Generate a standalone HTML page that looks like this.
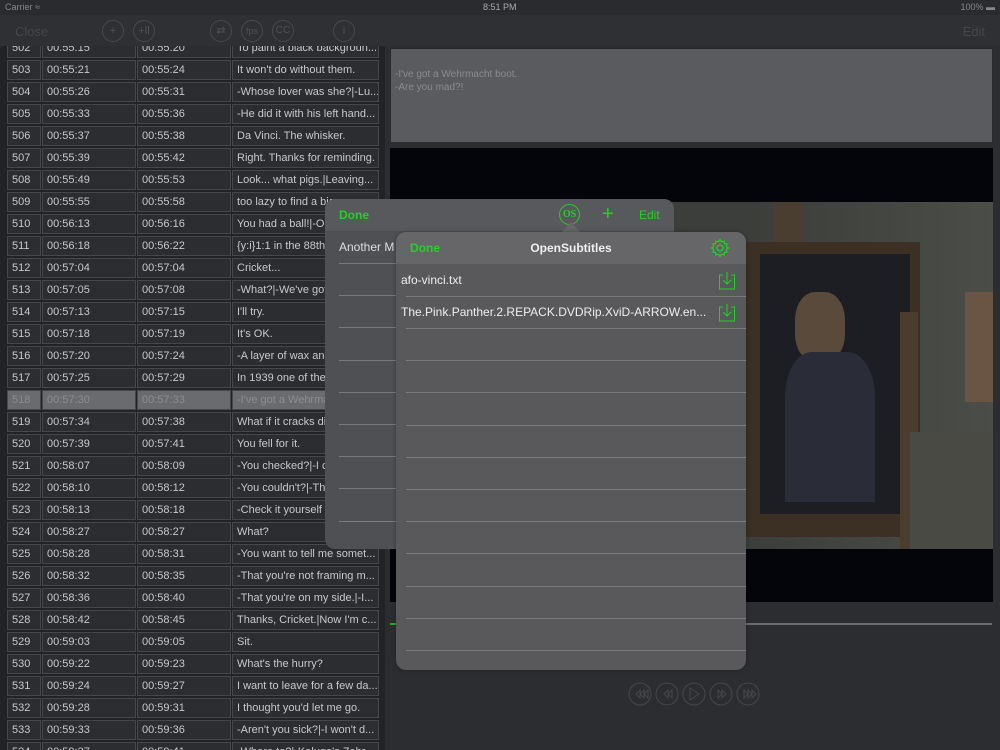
<!DOCTYPE html>
<html><head><meta charset="utf-8"><style>
*{margin:0;padding:0;box-sizing:border-box}
body{width:1000px;height:750px;overflow:hidden;background:#2c2d31;font-family:"Liberation Sans",sans-serif;position:relative;color:#c8c8cc}
.abs{position:absolute}
#status{left:0;top:0;width:1000px;height:15px;background:#2a2b2f;font-size:9px;color:#888}
#tb{left:0;top:15px;width:1000px;height:31px;background:#2f3034;z-index:5;opacity:1}
.tbi{position:absolute;top:5px;width:22px;height:22px;border:1px solid #48494d;border-radius:50%;color:#505155;font-size:11px;text-align:center;line-height:20px}
#rows{left:0;top:37px;width:385px;height:713px;overflow:hidden;background:#222327}
.r{position:absolute;left:7px;height:22px;width:372px}
.c{position:absolute;top:1px;height:20px;background:#2c2d31;border:1px solid #46474b;font-size:11px;color:#c8c8cc;line-height:18px;padding-left:4px;white-space:nowrap;overflow:hidden}
.c1{left:0;width:34px}.c2{left:35px;width:94px}.c3{left:130px;width:94px}.c4{left:225px;width:147px}
.hl .c{background:#6a6b6f;color:#8c8d91}
#txt{left:390px;top:48px;width:603px;height:95px;background:#5a5b5f;border:1px solid #2a2a2e;font-size:10px;color:#8a8b8f;padding:19px 0 0 4px;line-height:13px}
#vid{left:390px;top:148px;width:603px;height:454px;background:#03050a}
#img{left:390px;top:202px;width:603px;height:347px;background:linear-gradient(90deg,#3a3c3c 0%,#3b3e3a 60%,#4a4d48 100%)}
.sep{position:absolute;height:1px;background:#7a7a7c}
#back{left:325px;top:199px;width:349px;height:350px;background:#4f5054;border-radius:10px;overflow:hidden}
#front{left:396px;top:232px;width:350px;height:438px;background:#59595b;border-radius:10px;overflow:hidden;box-shadow:0 0 4px rgba(0,0,0,.3)}
.g{color:#1fd41f}
</style></head><body>
<div id="status" class="abs"><span style="position:absolute;left:5px;top:2px">Carrier ≈</span><span style="position:absolute;left:483px;top:2px;color:#aaa">8:51 PM</span><span style="position:absolute;right:5px;top:2px">100% ▬</span></div>
<div id="tb" class="abs">
<span style="position:absolute;left:15px;top:9px;font-size:13px;color:#45464a">Close</span>
<div class="tbi" style="left:102px">+</div><div class="tbi" style="left:133px">+ll</div>
<div class="tbi" style="left:210px">⇄</div><div class="tbi" style="left:241px;font-size:9px">fps</div><div class="tbi" style="left:272px;font-size:10px">CC</div>
<div class="tbi" style="left:333px">i</div>
<span style="position:absolute;right:15px;top:9px;font-size:13px;color:#45464a">Edit</span>
</div>
<div id="rows" class="abs">
<div class="r" style="top:0"><div class="c c1">502</div><div class="c c2">00:55:15</div><div class="c c3">00:55:20</div><div class="c c4">To paint a black backgroun...</div></div>
<div class="r" style="top:22px"><div class="c c1">503</div><div class="c c2">00:55:21</div><div class="c c3">00:55:24</div><div class="c c4">It won't do without them.</div></div>
<div class="r" style="top:44px"><div class="c c1">504</div><div class="c c2">00:55:26</div><div class="c c3">00:55:31</div><div class="c c4">-Whose lover was she?|-Lu...</div></div>
<div class="r" style="top:66px"><div class="c c1">505</div><div class="c c2">00:55:33</div><div class="c c3">00:55:36</div><div class="c c4">-He did it with his left hand...</div></div>
<div class="r" style="top:88px"><div class="c c1">506</div><div class="c c2">00:55:37</div><div class="c c3">00:55:38</div><div class="c c4">Da Vinci. The whisker.</div></div>
<div class="r" style="top:110px"><div class="c c1">507</div><div class="c c2">00:55:39</div><div class="c c3">00:55:42</div><div class="c c4">Right. Thanks for reminding.</div></div>
<div class="r" style="top:132px"><div class="c c1">508</div><div class="c c2">00:55:49</div><div class="c c3">00:55:53</div><div class="c c4">Look... what pigs.|Leaving...</div></div>
<div class="r" style="top:154px"><div class="c c1">509</div><div class="c c2">00:55:55</div><div class="c c3">00:55:58</div><div class="c c4">too lazy to find a big one</div></div>
<div class="r" style="top:176px"><div class="c c1">510</div><div class="c c2">00:56:13</div><div class="c c3">00:56:16</div><div class="c c4">You had a ball!|-Oh</div></div>
<div class="r" style="top:198px"><div class="c c1">511</div><div class="c c2">00:56:18</div><div class="c c3">00:56:22</div><div class="c c4">{y:i}1:1 in the 88th</div></div>
<div class="r" style="top:220px"><div class="c c1">512</div><div class="c c2">00:57:04</div><div class="c c3">00:57:04</div><div class="c c4">Cricket...</div></div>
<div class="r" style="top:242px"><div class="c c1">513</div><div class="c c2">00:57:05</div><div class="c c3">00:57:08</div><div class="c c4">-What?|-We've got</div></div>
<div class="r" style="top:264px"><div class="c c1">514</div><div class="c c2">00:57:13</div><div class="c c3">00:57:15</div><div class="c c4">I'll try.</div></div>
<div class="r" style="top:286px"><div class="c c1">515</div><div class="c c2">00:57:18</div><div class="c c3">00:57:19</div><div class="c c4">It's OK.</div></div>
<div class="r" style="top:308px"><div class="c c1">516</div><div class="c c2">00:57:20</div><div class="c c3">00:57:24</div><div class="c c4">-A layer of wax and</div></div>
<div class="r" style="top:330px"><div class="c c1">517</div><div class="c c2">00:57:25</div><div class="c c3">00:57:29</div><div class="c c4">In 1939 one of the</div></div>
<div class="r hl" style="top:352px"><div class="c c1">518</div><div class="c c2">00:57:30</div><div class="c c3">00:57:33</div><div class="c c4">-I've got a Wehrmacht</div></div>
<div class="r" style="top:374px"><div class="c c1">519</div><div class="c c2">00:57:34</div><div class="c c3">00:57:38</div><div class="c c4">What if it cracks di</div></div>
<div class="r" style="top:396px"><div class="c c1">520</div><div class="c c2">00:57:39</div><div class="c c3">00:57:41</div><div class="c c4">You fell for it.</div></div>
<div class="r" style="top:418px"><div class="c c1">521</div><div class="c c2">00:58:07</div><div class="c c3">00:58:09</div><div class="c c4">-You checked?|-I c</div></div>
<div class="r" style="top:440px"><div class="c c1">522</div><div class="c c2">00:58:10</div><div class="c c3">00:58:12</div><div class="c c4">-You couldn't?|-The</div></div>
<div class="r" style="top:462px"><div class="c c1">523</div><div class="c c2">00:58:13</div><div class="c c3">00:58:18</div><div class="c c4">-Check it yourself</div></div>
<div class="r" style="top:484px"><div class="c c1">524</div><div class="c c2">00:58:27</div><div class="c c3">00:58:27</div><div class="c c4">What?</div></div>
<div class="r" style="top:506px"><div class="c c1">525</div><div class="c c2">00:58:28</div><div class="c c3">00:58:31</div><div class="c c4">-You want to tell me somet...</div></div>
<div class="r" style="top:528px"><div class="c c1">526</div><div class="c c2">00:58:32</div><div class="c c3">00:58:35</div><div class="c c4">-That you're not framing m...</div></div>
<div class="r" style="top:550px"><div class="c c1">527</div><div class="c c2">00:58:36</div><div class="c c3">00:58:40</div><div class="c c4">-That you're on my side.|-I...</div></div>
<div class="r" style="top:572px"><div class="c c1">528</div><div class="c c2">00:58:42</div><div class="c c3">00:58:45</div><div class="c c4">Thanks, Cricket.|Now I'm c...</div></div>
<div class="r" style="top:594px"><div class="c c1">529</div><div class="c c2">00:59:03</div><div class="c c3">00:59:05</div><div class="c c4">Sit.</div></div>
<div class="r" style="top:616px"><div class="c c1">530</div><div class="c c2">00:59:22</div><div class="c c3">00:59:23</div><div class="c c4">What's the hurry?</div></div>
<div class="r" style="top:638px"><div class="c c1">531</div><div class="c c2">00:59:24</div><div class="c c3">00:59:27</div><div class="c c4">I want to leave for a few da...</div></div>
<div class="r" style="top:660px"><div class="c c1">532</div><div class="c c2">00:59:28</div><div class="c c3">00:59:31</div><div class="c c4">I thought you'd let me go.</div></div>
<div class="r" style="top:682px"><div class="c c1">533</div><div class="c c2">00:59:33</div><div class="c c3">00:59:36</div><div class="c c4">-Aren't you sick?|-I won't d...</div></div>
<div class="r" style="top:704px"><div class="c c1">534</div><div class="c c2">00:59:37</div><div class="c c3">00:59:41</div><div class="c c4">-Where to?|-Kaluga's Zebr...</div></div>
</div>
<div id="txt" class="abs">-I've got a Wehrmacht boot.<br>-Are you mad?!</div>
<div id="vid" class="abs"></div>
<div id="img" class="abs">
<div class="abs" style="left:383px;top:0;width:30px;height:40px;background:#4a3e30"></div>
<div class="abs" style="left:355px;top:40px;width:175px;height:295px;background:#3b3023"></div>
<div class="abs" style="left:370px;top:52px;width:150px;height:260px;background:#1c1e24"></div>
<div class="abs" style="left:405px;top:90px;width:50px;height:70px;background:#5a4a3c;border-radius:40%"></div>
<div class="abs" style="left:395px;top:150px;width:90px;height:150px;background:#2a2c38;border-radius:30% 30% 0 0"></div>
<div class="abs" style="left:510px;top:110px;width:18px;height:237px;background:#4a3d2e"></div>
<div class="abs" style="left:575px;top:90px;width:28px;height:110px;background:#6a5545"></div>
<div class="abs" style="left:520px;top:230px;width:83px;height:117px;background:#4a4a44"></div>
</div>
<div class="abs" style="left:390px;top:623px;width:602px;height:2px;background:#6a6b6e"></div>
<div class="abs" style="left:390px;top:623px;width:5px;height:2px;background:#1fb01f"></div>
<svg class="abs" style="left:620px;top:680px" width="150" height="28" fill="none" stroke="#46474b" stroke-width="1">
<circle cx="20" cy="14" r="11"/><circle cx="47" cy="14" r="11"/><circle cx="74" cy="14" r="11"/><circle cx="101" cy="14" r="11"/><circle cx="128" cy="14" r="11"/>
<path d="M16 14l4-4v8zM20 14l4-4v8zM24 14l4-4v8zM44 14l4-4v8zM48 14l4-4v8zM70 8l9 6-9 6zM98 10l4 4-4 4zM102 10l4 4-4 4zM124 10l4 4-4 4zM128 10l4 4-4 4zM132 10l4 4-4 4z"/>
</svg>
<div id="back" class="abs">
<div class="abs" style="left:0;top:0;width:349px;height:32px;background:#58595d"></div>
<span class="abs g" style="left:14px;top:9px;font-size:12px;font-weight:bold">Done</span>
<div class="abs g" style="left:234px;top:5px;width:21px;height:21px;border:1px solid #1fd41f;border-radius:50%;font-size:10px;font-weight:bold;text-align:center;line-height:19px;font-family:'Liberation Serif',serif">OS</div>
<span class="abs g" style="left:277px;top:5px;font-size:20px;line-height:20px">+</span>
<span class="abs g" style="left:314px;top:9px;font-size:12px">Edit</span>
<span class="abs" style="left:14px;top:41px;font-size:12px;color:#ddd">Another M</span>
<div class="sep" style="left:14px;top:64px;width:420px"></div><div class="sep" style="left:14px;top:96px;width:420px"></div><div class="sep" style="left:14px;top:128px;width:420px"></div><div class="sep" style="left:14px;top:161px;width:420px"></div><div class="sep" style="left:14px;top:193px;width:420px"></div><div class="sep" style="left:14px;top:225px;width:420px"></div><div class="sep" style="left:14px;top:257px;width:420px"></div><div class="sep" style="left:14px;top:289px;width:420px"></div><div class="sep" style="left:14px;top:322px;width:420px"></div>
</div>
<div class="abs" style="left:562px;top:222px;width:0;height:0;border-left:9px solid transparent;border-right:9px solid transparent;border-bottom:10px solid #666"></div>
<div id="front" class="abs">
<div class="abs" style="left:0;top:0;width:350px;height:32px;background:#666668"></div>
<span class="abs g" style="left:14px;top:9px;font-size:12px;font-weight:bold">Done</span>
<span class="abs" style="left:0;width:350px;text-align:center;top:9px;font-size:12px;font-weight:bold;color:#eee">OpenSubtitles</span>
<svg class="abs" style="left:314px;top:6px" width="20" height="20" fill="none" stroke="#1fd41f" stroke-width="1.2"><circle cx="10" cy="10" r="3"/><path d="M10 1.5l1.5 2.3 2.6-.9.3 2.7 2.7.3-.9 2.6 2.3 1.5-2.3 1.5.9 2.6-2.7.3-.3 2.7-2.6-.9L10 18.5l-1.5-2.3-2.6.9-.3-2.7-2.7-.3.9-2.6L1.5 10l2.3-1.5-.9-2.6 2.7-.3.3-2.7 2.6.9z"/></svg>
<span class="abs" style="left:5px;top:41px;font-size:12px;color:#eee">afo-vinci.txt</span>
<span class="abs" style="left:5px;top:73px;font-size:12px;color:#eee">The.Pink.Panther.2.REPACK.DVDRip.XviD-ARROW.en...</span>
<svg class="abs" style="left:322px;top:40px" width="18" height="18" fill="none" stroke="#1fd41f" stroke-width="1"><path d="M5 3H1.5v14h15V3H13M9 0v12M5 8l4 4 4-4"/></svg>
<svg class="abs" style="left:322px;top:72px" width="18" height="18" fill="none" stroke="#1fd41f" stroke-width="1"><path d="M5 3H1.5v14h15V3H13M9 0v12M5 8l4 4 4-4"/></svg>
<div class="sep" style="left:10px;top:64px;width:340px"></div><div class="sep" style="left:10px;top:96px;width:340px"></div><div class="sep" style="left:10px;top:128px;width:340px"></div><div class="sep" style="left:10px;top:160px;width:340px"></div><div class="sep" style="left:10px;top:193px;width:340px"></div><div class="sep" style="left:10px;top:225px;width:340px"></div><div class="sep" style="left:10px;top:257px;width:340px"></div><div class="sep" style="left:10px;top:289px;width:340px"></div><div class="sep" style="left:10px;top:321px;width:340px"></div><div class="sep" style="left:10px;top:354px;width:340px"></div><div class="sep" style="left:10px;top:386px;width:340px"></div><div class="sep" style="left:10px;top:418px;width:340px"></div>
</div>
</body></html>
